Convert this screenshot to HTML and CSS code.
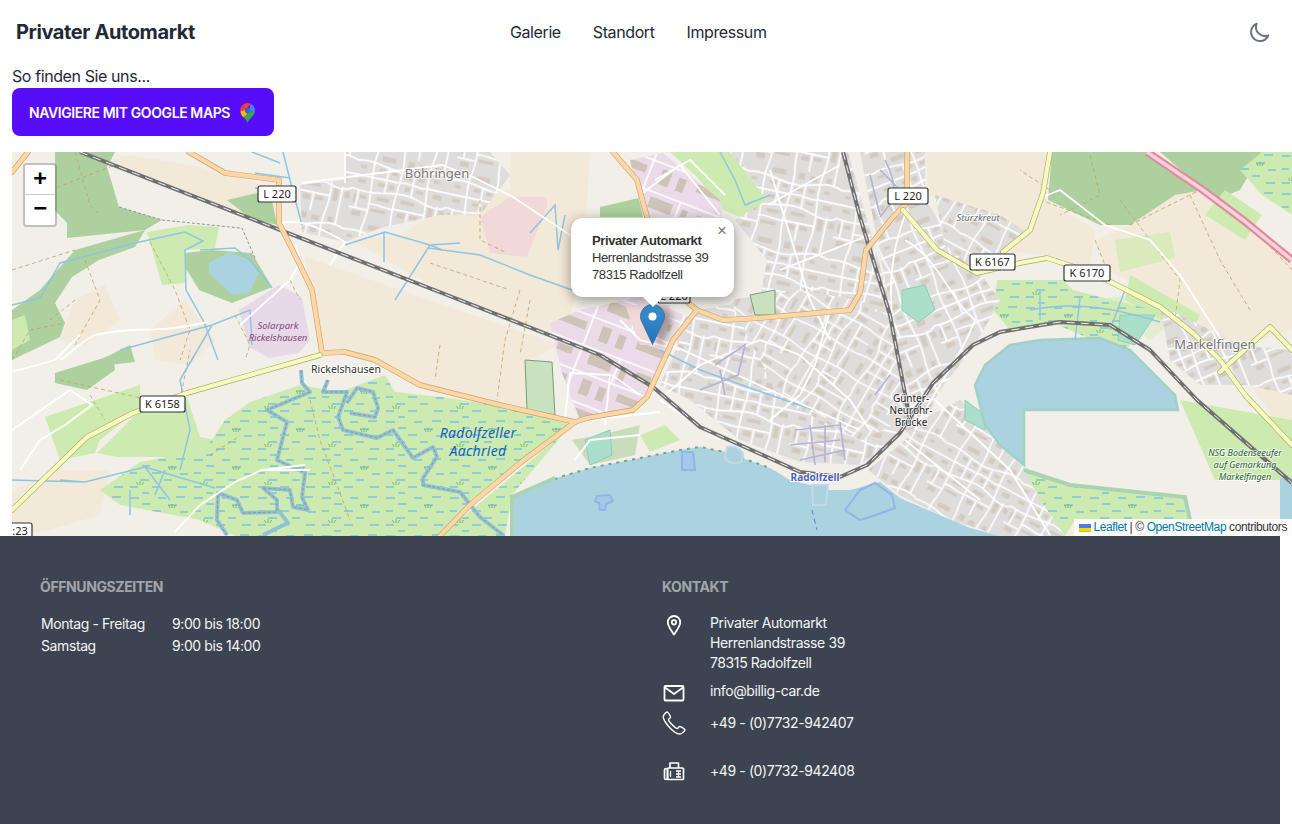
FILE: index.html
```html
<!DOCTYPE html>
<html lang="de">
<head>
    <meta charset="UTF-8">
    <meta name="viewport" content="width=device-width, initial-scale=1.0">
    <title>Privater Automarkt - Standort</title>
    <link rel="stylesheet" href="styles.css">
</head>
<body>
    <!-- Navigation -->
    <header class="navbar">
        <a class="brand" href="#">Privater Automarkt</a>
        <nav class="nav-links">
            <a href="#">Galerie</a>
            <a href="#">Standort</a>
            <a href="#">Impressum</a>
        </nav>
        <button class="theme-toggle" type="button" aria-label="Dark Mode">
            <svg viewBox="0 0 24 24" width="24" height="24" fill="none" stroke="currentColor" stroke-width="2" stroke-linecap="round" stroke-linejoin="round">
                <path d="M20.354 15.354A9 9 0 018.646 3.646 9.003 9.003 0 0012 21a9.003 9.003 0 008.354-5.646z"/>
            </svg>
        </button>
    </header>

    <!-- Standort -->
    <section class="location">
        <p class="location-intro">So finden Sie uns...</p>
        <a class="btn-maps" href="#">
            Navigiere mit Google Maps
            <svg viewBox="0 0 15 20" width="15" height="20">
                <path d="M15 7.5C15 12.5 9 15.5 7.5 20 6.6 16.6 4.5 15.5 3.3 14.3L9.7 9z" fill="#34a853"/>
                <path d="M.3 8.6 5 6.5 7.5 11 3.3 14.3C1.8 12.6.6 10.7.3 8.6z" fill="#fbbc04"/>
                <path d="M.3 8.6C0 7 .4 4.3 2.3 2.3L5.5 6 5 6.5z" fill="#ea4335"/>
                <path d="M2.3 2.3C3.5 1 5.3 0 7.5 0 8.7 0 9.8.3 10.7.8L7.5 4.7 5.5 6z" fill="#ea4335"/>
                <path d="M10.7.8C13.3 2 15 4.5 15 7.5L9.7 9 9.5 5.5z" fill="#4285f4"/>
                <circle cx="7.5" cy="7.5" r="2.7" fill="#3c5fd8"/>
            </svg>
        </a>

        <div class="map">
            <svg class="map-tiles" viewBox="12 152 1280 384" width="1280" height="384">
                <defs>
                    <g id="townTile">
                        <rect width="150" height="110" fill="#dfdddc"/>
                        <path d="M6 24h9v5H6zM36 24h10v6H36zM56 26h9v5h-9zM76 28h12v5H76zM98 26h10v6H98zM122 24h9v5h-9zM6 46h12v6H6zM38 46h12v6H38zM56 46h8v8h-8zM80 44h8v7h-8zM98 46h12v5H98zM125 46h14v8h-14zM40 68h20v6H40zM78 66h22v6H78zM122 68h8v20h-8zM4 70h4v14H4zM14 70h10v6H14zM34 88h24v5H34zM76 86h12v8H76zM96 86h12v6H96zM140 70h8v10h-8zM36 4h22v8H36zM78 4h10v10H78zM96 6h12v8H96zM122 4h8v8h-8zM6 96h14v8H6z" fill="#d3cbc0"/>
                        <path d="M0 18C30 10 60 30 90 22S130 10 150 18M0 62C40 70 70 50 100 60S140 70 150 62M28 0C20 30 36 70 28 110M70 0C76 35 62 70 70 110M115 0C108 40 124 70 115 110M0 40H28M28 40H68M70 40C90 35 100 45 115 40M115 40H150M50 20V60M92 22V60M28 82C45 78 55 86 70 82M70 82H118M135 64V110M135 0V16M10 62V92M0 92H28M92 82V110" stroke="#fff" stroke-width="2.6" fill="none"/>
                    </g>
                    <pattern id="townA" width="150" height="110" patternUnits="userSpaceOnUse" patternTransform="rotate(-22) scale(.62)">
                        <use href="#townTile"/>
                    </pattern>
                    <pattern id="townB" width="150" height="110" patternUnits="userSpaceOnUse" patternTransform="rotate(28) scale(.58)">
                        <use href="#townTile"/>
                    </pattern>
                    <pattern id="townC" width="150" height="110" patternUnits="userSpaceOnUse" patternTransform="rotate(12) scale(.64)">
                        <use href="#townTile"/>
                    </pattern>
                    <pattern id="townD" width="150" height="110" patternUnits="userSpaceOnUse" patternTransform="rotate(-60) scale(.56)">
                        <use href="#townTile"/>
                    </pattern>
                    <pattern id="indus" width="84" height="56" patternUnits="userSpaceOnUse" patternTransform="rotate(21)">
                        <rect width="84" height="56" fill="#ebdbe8"/>
                        <path d="M6 6h24v11H6zM40 7h6v16h-6zM56 7h16v7H56zM8 32h10v16H8zM26 34h8v14h-8zM46 34h30v8H46z" fill="#cec3b7"/>
                        <path d="M0 1H84M0 27H84M36 1V27M80 1V56" stroke="#fff" stroke-width="1.7" fill="none"/>
                    </pattern>
                    <pattern id="wet" width="64" height="38" patternUnits="userSpaceOnUse">
                        <rect width="64" height="38" fill="#cdebb0"/>
                        <path d="M2 4h9M30 4h8M48 3h9M14 10h8M40 11h9M2 17h7M24 17h9M52 18h8M12 24h9M36 24h8M2 31h8M24 31h9M50 31h9M14 37h7" stroke="#4fb0f7" stroke-width="1" fill="none"/>
                        <path d="M42 14l-1.5-3M44 14v-4M46 14l1.5-3M10 29l-1.5-3M12 29v-4M14 29l1.5-3" stroke="#72b463" stroke-width=".9" fill="none"/>
                    </pattern>
                </defs>

                <rect x="12" y="152" width="1280" height="384" fill="#f2efe9"/>

                <!-- Felder -->
                <g class="farmland">
                    <path d="M110 160L270 225 282 190 240 178 190 165 130 155z"/>
                    <path d="M305 257L560 345 530 360 525 412 480 398 410 382 375 360 345 352 322 352z"/>
                    <path d="M352 240L400 235 440 210 510 190 510 152 590 152 585 240 575 300 560 340 442 292z"/>
                    <path d="M925 152L1052 152 1042 200 1003 252 960 215 930 195z"/>
                    <path d="M1130 225L1160 195 1200 190 1292 265 1292 330 1240 345 1195 325 1160 300 1105 268 1095 240z"/>
                    <path d="M1000 250L1040 195 1095 230 1090 268 1050 256z"/>
                    <path d="M1240 370L1292 390 1292 445z"/>
                    <path d="M75 300L105 285 120 320 85 345 60 340z"/>
                    <path d="M150 330L185 300 215 340 190 365 155 360z"/>
                    <path d="M12 490L60 470 110 470 100 515 50 530 12 535z"/>
                </g>

                <!-- Wald -->
                <g class="forest">
                    <path d="M55 152L115 152 107 167 119 207 162 220 145 230 67 238 67 223 45 200 55 183z"/>
                    <path d="M75 250L145 230 135 247 99 260 72 277 55 303 65 323 60 337 12 360 12 310 40 290z"/>
                    <path d="M55 373L113 355 115 370 87 390 55 383z"/>
                    <path d="M1052 152L1147 152 1203 190 1175 195 1130 225 1100 225 1048 200z"/>
                    <path d="M1160 152L1262 152 1240 190 1215 200z"/>
                    <path d="M227 200L270 190 277 225 250 218z"/>
                    <path d="M185 253L212 250 252 253 272 287 232 303 199 290 185 267z"/>
                    <path d="M600 207L643 197 643 217 600 217z"/>
                    <path d="M100 360L130 345 135 362 100 366z"/>
                    <path d="M340 415L350 410 355 440 335 435z" opacity=".7"/>
                    <path d="M572 440L600 435 640 425 635 455 590 465z" opacity=".6"/>
                </g>

                <!-- Wiesen -->
                <g class="meadow">
                    <path d="M147 232L189 225 219 227 215 248 185 250 185 283 162 285z"/>
                    <path d="M670 152L730 152 767 200 747 220 723 210 697 177z"/>
                    <path d="M147 403L187 397 200 437 233 443 177 457 117 457 97 453z"/>
                    <path d="M45 417L140 385 140 408 100 440 95 453 60 460z"/>
                    <path d="M12 320L25 315 30 340 12 350z"/>
                    <path d="M1088 300L1160 292 1180 315 1150 340z" opacity=".4"/>
                    <path d="M1115 240L1170 232 1175 258 1120 272z" opacity=".7"/>
                    <path d="M1130 275L1200 315 1190 335 1125 300z"/>
                    <path d="M1180 400L1292 420 1292 480 1215 480z"/>
                    <path d="M1225 190L1262 215 1245 240 1205 215z"/>
                    <path d="M640 435L665 425 680 440 650 452z"/>
                </g>

                <!-- Nass -->
                <path fill="url(#wet)" d="M100 490L140 462 205 450 225 420 250 402 300 385 340 392 385 375 395 392 450 398 520 410 568 424 520 463 470 505 440 536 235 536 200 520 120 505z"/>
                <path fill="url(#wet)" d="M997 280L1063 280 1073 290 1153 310 1140 327 1127 350 1093 340 1053 323 1010 330 993 310z"/>
                <path fill="url(#wet)" d="M1262 152L1292 152 1292 215 1262 195 1240 170z"/>
                <path fill="url(#wet)" d="M1024 470L1070 485 1185 497 1190 520 1075 520 1065 536 1040 500z"/>
                <path fill="url(#wet)" d="M440 536L510 478 565 432 512 495 505 536z"/>

                <!-- Solarpark, Gewerbe -->
                <path class="solar" d="M239 310L279 285 302 297 310 340 299 353 269 358 249 347z"/>
                <path fill="url(#indus)" d="M630 160L663 153 720 200 723 217 643 217z"/>
                <path fill="url(#indus)" d="M550 323L580 310 640 297 690 317 683 360 677 340 647 397 637 410 580 420 562 373z"/>
                <path class="retail" d="M480 217L510 197 547 197 547 207 527 257 490 253z"/>
                <path class="retail" d="M625 305L670 305 665 345 640 345z"/>

                <!-- Orte -->
                <path fill="url(#townC)" d="M300 185L345 180 345 152 490 152 510 175 480 215 440 215 380 228 345 242 302 232z"/>
                <path fill="url(#townC)" d="M730 152L848 152 895 320 915 400 895 440 860 465 800 462 740 440 690 400 660 385 680 340 697 310 760 300 767 260 735 220 767 200z"/>
                <path fill="url(#townD)" d="M730 300L800 290 860 300 895 320 905 420 860 440 780 400z"/>
                <path fill="url(#townA)" d="M860 152L925 152 925 200 985 280 1000 300 975 345 940 390 915 440 905 430 895 330z"/>
                <path fill="url(#townB)" d="M935 195L1000 215 1030 235 1003 252 975 270 945 245z"/>
                <path fill="url(#townB)" d="M868 470L905 440 930 415 960 400 985 425 1000 445 1024 468 1040 500 1065 536 1000 536 950 520 900 495z"/>
                <path fill="url(#townA)" d="M1160 305L1200 325 1240 345 1292 350 1292 395 1245 385 1200 385 1170 360z"/>

                <!-- Sport, Gaerten -->
                <path class="pitch" d="M902 290L925 285 935 310 918 322 902 310z"/>
                <path class="pitch" d="M1120 315L1155 315 1135 345 1118 340z"/>
                <path class="pitch" d="M965 400L985 415 985 430 965 420z"/>
                <path class="pitch" d="M585 440L610 430 612 455 590 465z"/>
                <path class="allot" d="M750 295L775 290 775 315 755 315z"/>
                <path class="allot" d="M525 360L552 362 555 415 527 410z"/>

                <!-- Wasser -->
                <path class="water" d="M209 263L229 252 249 260 259 273 249 293 232 295 209 273z"/>
                <path class="shore" d="M975 385L985 365 1010 345 1040 340 1100 338 1130 350 1175 395 1178 410 1024 410 1024 465 1000 445 985 425z"/>
                <path class="water" d="M512 536L512 497 528 490 560 477 590 468 620 462 640 458 680 450 700 447 725 452 770 468 790 480 830 490 850 490 880 482 900 498 970 528 1000 536z"/>
                <path class="shore-line" d="M510 497L528 490 560 477 590 468 620 462 640 458 680 450 700 447 725 452 770 468"/>
                <path class="reed" d="M512 536L512 497 555 478"/>
                <path class="water-feature" d="M597 496L610 495 613 501 606 504 605 510 600 510 599 503 595 501z"/>
                <path class="water-feature water-ring" d="M845 510L860 490 875 483 892 495 895 508 870 517 860 520z"/>
                <path class="water-feature" d="M682 452L693 452 695 470 682 470z"/>
                <path class="harbor" d="M812 485L828 485 826 505 813 505z"/>
                <path class="harbor" d="M727 447C735 445 745 450 743 458 740 466 730 464 725 458z"/>
                <path class="ferry" d="M812 510L817 530"/>
                <path class="water" d="M1280 478H1292V519H1280z"/>
                <path class="reed" d="M1024 470L1070 485 1185 497 1190 520"/>

                <!-- Baeche -->
                <g class="stream">
                    <path d="M252 152L280 163M255 173L290 178M255 188L290 193M283 152L290 180 302 225"/>
                    <path d="M12 305L40 298 60 263 135 243 185 232 203 241 185 250 186 290 204 322 218 360"/>
                    <path d="M200 250L235 248 250 260 272 288"/>
                    <path d="M345 245L385 232 430 245 460 243M384 232V262M430 245L395 300M430 245L442 250"/>
                    <path d="M428 248L480 255 530 275 572 290 595 295"/>
                    <path d="M120 350L212 325 250 310 252 345M212 325L180 380 190 430 180 470"/>
                    <path d="M12 480L85 482 145 467 215 488M130 490V515M85 482L60 480M165 470L155 495M145 467L170 500"/>
                    <path d="M530 233L555 205 558 250 565 215"/>
                    <path d="M720 152L735 180 745 205 770 195"/>
                    <path d="M660 350L700 370 770 395 820 412"/>
                    <path d="M1040 290L1040 320M1080 298L1075 340M1125 290L1110 330M1030 310C1080 300 1120 310 1160 322"/>
                </g>

                <!-- Aach -->
                <g class="river">
                    <path d="M301 370L302 383 310 392 267 410 287 422 277 460 305 473 302 497 308 510 293 507 290 490 263 488 277 500 277 512 243 513 237 500 218 493 217 520 227 535"/>
                    <path d="M328 380L323 392 347 392 338 417 343 430 377 438 393 430 413 458 433 447 437 457 423 478 423 485 460 492 480 517 503 535"/>
                    <path d="M347 403L357 388 373 392 378 408 375 417 350 413"/>
                    <path d="M263 535L288 523 278 510"/>
                </g>
                <g class="river-dash">
                    <path d="M301 370L302 383 310 392 267 410 287 422 277 460 305 473 302 497 308 510 293 507 290 490 263 488 277 500 277 512 243 513 237 500 218 493 217 520 227 535"/>
                    <path d="M328 380L323 392 347 392 338 417 343 430 377 438 393 430 413 458 433 447 437 457 423 478 423 485 460 492 480 517 503 535"/>
                    <path d="M347 403L357 388 373 392 378 408 375 417 350 413"/>
                    <path d="M119 207L162 220 240 228 242 228 255 258"/>
                </g>

                <!-- Feldwege -->
                <g class="track">
                    <path d="M75 152L90 205 100 215M50 190L115 165M12 270L75 250M12 360L30 330 65 323M85 260L100 300 75 345"/>
                    <path d="M150 242L175 290 190 330 180 360M75 300L50 320M235 315L250 345 245 360M290 280L300 300"/>
                    <path d="M480 200V240L505 252M520 290L505 340 497 400M430 263L510 290M530 300L520 355M440 345L435 380"/>
                    <path d="M1050 190L1020 170M1040 200L1110 225M1090 155L1100 195 1060 215M1130 225L1200 190M1095 240L1105 265M1200 190L1255 230 1292 270M1190 195L1220 260 1250 310M1120 200L1180 280 1175 320"/>
                    <path d="M180 400L190 350M60 380L150 400M90 395L105 420M210 455L240 436M310 400L320 440 350 520"/>
                </g>

                <!-- Strassen -->
                <g class="street">
                    <path d="M175 532L200 505 235 482 262 470 305 465M262 470H310"/>
                    <path d="M70 390L92 405 65 425 40 440 20 470M12 430L70 390"/>
                    <path d="M12 372L55 360M55 360L80 335"/>
                    <path d="M240 325L290 280 300 262 296 245M208 322C150 335 140 325 95 335 75 345 70 355 60 360"/>
                    <path d="M302 183L442 165 473 177 513 197 573 237M345 183V152"/>
                    <path d="M282 223C300 218 325 230 345 242L330 265"/>
                    <path d="M665 395L700 365 760 340M760 340L800 355 850 400 870 430M650 335L770 390 860 430M830 310L815 365 800 395 770 420"/>
                    <path d="M768 205L840 165M780 270L870 235M770 170L810 300 830 340"/>
                    <path d="M905 215C890 255 885 300 900 370M905 240C940 260 950 300 975 320 960 360 930 395 915 430"/>
                    <path d="M1040 198L1060 190 1105 225 1150 240 1180 275 1225 345"/>
                    <path d="M935 400L1010 470 1050 535M905 440L980 500"/>
                    <path d="M575 460L590 440 640 435M590 420L660 412M660 400L720 440"/>
                    <path d="M570 373L610 375 605 425M612 375L640 395M570 372L565 420M680 350L640 340 620 320"/>
                    <path d="M655 180L690 160 725 195M640 195L680 165 720 215"/>
                </g>
                <g class="pedestrian">
                    <path d="M795 430L840 425M790 445L840 440M800 460L845 450M810 425L815 465M825 425V462M840 422L845 460"/>
                    <path d="M715 365L745 345 738 375 700 390M720 370L725 395M880 170L900 190M870 175L880 215M885 160C900 190 895 200 880 217"/>
                    <path d="M875 395L890 375"/>
                </g>

                <!-- Bahn -->
                <path class="rail" d="M80 152L442 293 600 355 653 387 700 427 767 457 800 472 840 477 867 465 900 433 933 383 973 345 1000 332 1060 322 1110 325 1150 350 1197 400 1292 483"/>
                <path class="rail-dash" d="M80 152L442 293 600 355 653 387 700 427 767 457 800 472 840 477 867 465 900 433 933 383 973 345 1000 332 1060 322 1110 325 1150 350 1197 400 1292 483"/>
                <path class="rail" d="M843 152L860 217 890 315 910 420"/>
                <path class="rail-dash" d="M843 152L860 217 890 315 910 420"/>

                <!-- Hauptstrassen -->
                <g class="road-case">
                    <path d="M189 152L225 173 279 180 279 223 299 263 312 290 322 353 345 352 375 360 420 385 500 405 575 422 587 418 633 410 647 397 673 340 697 310 723 320 760 318 850 310 860 293 866 250 893 217 907 203 907 152"/>
                    <path d="M613 152L637 180 647 217 660 280 697 310"/>
                    <path d="M575 422L520 463 470 505 440 536"/>
                    <path d="M12 172L28 152"/>
                </g>
                <g class="road-secondary">
                    <path d="M189 152L225 173 279 180 279 223 299 263 312 290 322 353 345 352 375 360 420 385 500 405 575 422 587 418 633 410 647 397 673 340 697 310 723 320 760 318 850 310 860 293 866 250 893 217 907 203 907 152"/>
                    <path d="M613 152L637 180 647 217 660 280 697 310"/>
                    <path d="M575 422L520 463 470 505 440 536"/>
                    <path d="M12 172L28 152"/>
                </g>
                <g class="road-case-y">
                    <path d="M12 510L87 437 133 413 187 393 320 355"/>
                    <path d="M903 210L937 250 977 273 1020 263 1047 258 1093 273 1160 307 1193 333 1220 360 1245 395 1292 445"/>
                    <path d="M1003 252L1030 230 1043 193 1050 152"/>
                    <path d="M1220 372L1270 327 1292 350"/>
                </g>
                <g class="road-tertiary">
                    <path d="M12 510L87 437 133 413 187 393 320 355"/>
                    <path d="M903 210L937 250 977 273 1020 263 1047 258 1093 273 1160 307 1193 333 1220 360 1245 395 1292 445"/>
                    <path d="M1003 252L1030 230 1043 193 1050 152"/>
                    <path d="M1220 372L1270 327 1292 350"/>
                </g>
                <path class="motorway" d="M1147 152L1203 190 1243 220 1292 260"/>
                <path class="motorway-in" d="M1147 152L1203 190 1243 220 1292 260"/>

                <!-- Beschriftung -->
                <g class="shield">
                    <rect x="258" y="186" width="38" height="16" rx="2"/><text x="277" y="198">L 220</text>
                    <rect x="888" y="188" width="40" height="16" rx="2"/><text x="908" y="200">L 220</text>
                    <rect x="970" y="254" width="45" height="16" rx="2"/><text x="992.5" y="266">K 6167</text>
                    <rect x="1064" y="265" width="46" height="16" rx="2"/><text x="1087" y="277">K 6170</text>
                    <rect x="140" y="396" width="45" height="16" rx="2"/><text x="162.5" y="408">K 6158</text>
                    <rect x="-2" y="523" width="34" height="16" rx="2"/><text x="20" y="535">:23</text>
                    <rect x="658" y="289" width="32" height="14" rx="2"/><text x="674" y="300">L 220</text>
                </g>
                <text class="label place" x="437" y="178">Böhringen</text>
                <text class="label place" x="1215" y="349">Markelfingen</text>
                <text class="label hamlet" x="346" y="373">Rickelshausen</text>
                <text class="label suburb" x="978" y="221">Stürzkreut</text>
                <text class="label bridge" x="911" y="402">Günter-</text>
                <text class="label bridge" x="911" y="414">Neurohr-</text>
                <text class="label bridge" x="911" y="426">Brücke</text>
                <text class="label station" x="815" y="481">Radolfzell</text>
                <text class="label solar-name" x="278" y="329">Solarpark</text>
                <text class="label solar-name" x="278" y="341">Rickelshausen</text>
                <text class="label nature" x="478" y="438">Radolfzeller</text>
                <text class="label nature" x="478" y="456">Aachried</text>
                <text class="label reserve" x="1245" y="456">NSG Bodenseeufer</text>
                <text class="label reserve" x="1245" y="468">auf Gemarkung</text>
                <text class="label reserve" x="1245" y="480">Markelfingen</text>
            </svg>

            <div class="zoom-control">
                <a class="zoom-btn" href="#">+</a>
                <a class="zoom-btn" href="#">&#x2212;</a>
            </div>

            <!-- Marker mit Popup -->
            <svg class="marker" viewBox="0 0 25 41" width="25" height="41">
                <defs>
                    <linearGradient id="pinFill" x1="0" y1="0" x2="0" y2="1">
                        <stop offset="0" stop-color="#3f8fc8"/>
                        <stop offset="1" stop-color="#1f74c0"/>
                    </linearGradient>
                </defs>
                <path d="M12.5.5C5.9.5.5 5.8.5 12.4c0 2.4.8 4.5 1.9 6.5L12.5 40.5l10.1-21.6c1.1-2 1.9-4.1 1.9-6.5C24.5 5.8 19.1.5 12.5.5z" fill="url(#pinFill)" stroke="#2a6ea3" stroke-width=".8"/>
                <circle cx="12.5" cy="12.5" r="4" fill="#fff"/>
            </svg>
            <div class="popup">
                <a class="popup-close" href="#">&#215;</a>
                <p class="popup-text"><b>Privater Automarkt</b><br>Herrenlandstrasse 39<br>78315 Radolfzell</p>
                <div class="popup-tip"></div>
            </div>

            <div class="attribution">
                <a href="#"><svg class="flag" viewBox="0 0 12 8" width="12" height="8"><path fill="#4c7be1" d="M0 0h12v4H0z"/><path fill="#ffd500" d="M0 4h12v3H0z"/><path fill="#e0bc00" d="M0 7h12v1H0z"/></svg> Leaflet</a> | © <a href="#">OpenStreetMap</a> contributors
            </div>
        </div>
    </section>

    <!-- Footer -->
    <footer class="footer">
        <div class="footer-col">
            <h2 class="footer-title">Öffnungszeiten</h2>
            <table class="hours">
                <tr><td>Montag - Freitag</td><td>9:00 bis 18:00</td></tr>
                <tr><td>Samstag</td><td>9:00 bis 14:00</td></tr>
            </table>
        </div>
        <div class="footer-col">
            <h2 class="footer-title">Kontakt</h2>
            <ul class="contact">
                <li class="contact-row">
                    <svg viewBox="0 0 24 24" width="24" height="24" fill="none" stroke="#fff" stroke-width="1.8" stroke-linejoin="round">
                        <path d="M12 21.5C9.5 17.5 5.8 13.5 5.8 9.3 5.8 5.7 8.5 3 12 3s6.2 2.7 6.2 6.3c0 4.2-3.7 8.2-6.2 12.2z"/>
                        <circle cx="12" cy="9.3" r="2.2"/>
                    </svg>
                    <span>Privater Automarkt<br>Herrenlandstrasse 39<br>78315 Radolfzell</span>
                </li>
                <li class="contact-row">
                    <svg viewBox="0 0 24 24" width="24" height="24" fill="none" stroke="#fff" stroke-width="1.8" stroke-linejoin="round">
                        <rect x="2.5" y="5" width="19" height="14.5" rx="1"/>
                        <path d="M3 6.5L12 13l9-6.5"/>
                    </svg>
                    <span>info@billig-car.de</span>
                </li>
                <li class="contact-row contact-row-phone">
                    <svg viewBox="0 0 24 24" width="24" height="24" fill="none" stroke="#fff" stroke-width="1.4" stroke-linejoin="round">
                        <path d="M1.5 4.5C2.5 3 4 1 5.2 1 6 1 8.5 5.2 8.5 6.2 8.5 7.3 6.5 7.8 6.5 8.8 6.5 10.5 13.5 17.5 15.2 17.5 16.2 17.5 16.7 15.5 17.7 15.5 18.7 15.5 23 18 23 18.8 23 20 21 21.5 19.5 22.5 17.5 23.8 13 22.5 8 17 3 11.5.7 6.5 1.5 4.5z"/>
                    </svg>
                    <span>+49 - (0)7732-942407</span>
                </li>
                <li class="contact-row contact-row-fax">
                    <svg viewBox="0 0 24 24" width="24" height="24" fill="none" stroke="#fff" stroke-width="1.7" stroke-linejoin="round">
                        <path d="M8 9V4h8.5v5"/>
                        <rect x="5.5" y="9" width="16" height="11.5" rx="1"/>
                        <rect x="2.5" y="9.5" width="3" height="11" rx="1.5"/>
                        <path d="M14 12h5M14 15h5M14 18h5M16.5 12v6M8.5 12v6" stroke-width="1.3"/>
                    </svg>
                    <span>+49 - (0)7732-942408</span>
                </li>
            </ul>
        </div>
    </footer>
</body>
</html>
```

FILE: styles.css
```css
* {
    box-sizing: border-box;
}
body {
    margin: 0;
    font-family: 'Inter', 'Liberation Sans', sans-serif;
    font-size: 16px;
    line-height: 24px;
    letter-spacing: -0.4px;
    color: #1f2937;
    background: #fff;
    overflow-x: hidden;
}
a {
    color: inherit;
    text-decoration: none;
}

/* Navigation */
.navbar {
    display: flex;
    align-items: center;
    height: 64px;
    padding: 0 20px 0 16px;
}
.brand {
    width: 494px;
    font-size: 20px;
    font-weight: 700;
    color: #1f2937;
}
.nav-links {
    display: flex;
    gap: 32px;
}
.theme-toggle {
    margin-left: auto;
    padding: 0;
    border: none;
    background: none;
    color: #6b7280;
    display: flex;
}

/* Standort */
.location {
    padding: 0 0 0 12px;
}
.location-intro {
    margin: 0;
    height: 24px;
}
.btn-maps {
    display: inline-flex;
    align-items: center;
    gap: 10px;
    height: 48px;
    padding: 2px 19px 0 17px;
    border-radius: 8px;
    background: #570df8;
    color: #fff;
    font-size: 14px;
    font-weight: 600;
    text-transform: uppercase;
}
.map {
    position: relative;
    width: 1280px;
    height: 384px;
    margin-top: 16px;
    overflow: hidden;
    font-family: 'Liberation Sans', Arial, sans-serif;
}
.map-tiles {
    display: block;
    letter-spacing: 0;
}

/* Kartenflaechen */
.farmland path { fill: #f3e9d8; }
.forest path { fill: #add19e; }
.meadow path { fill: #cdebb0; }
.solar { fill: #e8d9e8; }
.retail { fill: #f1d9d8; }
.pitch { fill: #aae0cb; stroke: #8fcdb6; stroke-width: 1; }
.allot { fill: #c9e1bf; stroke: #7e9a76; stroke-width: 1; }
.water { fill: #aad3df; }
.shore { fill: #aad3df; stroke: #a3d0c6; stroke-width: 2.5; }
.shore-line { fill: none; stroke: #7a9f96; stroke-width: 2; stroke-dasharray: 3 5; }
.reed { fill: none; stroke: #a9d3b3; stroke-width: 4; }
.water-feature { fill: #a3c8ea; stroke: #8eb6e6; stroke-width: 2; }
.water-ring { fill: #aad3df; }
.harbor { fill: #aad3df; stroke: #c9d6ea; stroke-width: 2; }
.ferry { stroke: #5b7fd8; stroke-width: 1; stroke-dasharray: 5 4; fill: none; }
.stream path { fill: none; stroke: #8ec5e2; stroke-width: 1.5; }
.river path { fill: none; stroke: #93c2d3; stroke-width: 4; stroke-linejoin: round; }
.river-dash path { fill: none; stroke: #84989c; stroke-width: 1; stroke-dasharray: 3 2; }
.track path { fill: none; stroke: #bf9f63; stroke-width: .8; stroke-dasharray: 4 3; }
.street path { fill: none; stroke: #fff; stroke-width: 1.8; stroke-linejoin: round; }
.pedestrian path { fill: none; stroke: #b4b5d6; stroke-width: 1.7; }
.rail { fill: none; stroke: #707070; stroke-width: 4; stroke-linejoin: round; }
.rail-dash { fill: none; stroke: #f2f2f2; stroke-width: 1; stroke-dasharray: 8 6; }
.road-case path, .road-case-y path { fill: none; stroke-linejoin: round; stroke-linecap: round; }
.road-case path { stroke: #c9a269; stroke-width: 5.5; }
.road-secondary path { fill: none; stroke: #fcd6a4; stroke-width: 4.3; stroke-linejoin: round; stroke-linecap: round; }
.road-case-y path { stroke: #a9a964; stroke-width: 5.5; }
.road-tertiary path { fill: none; stroke: #f7fabf; stroke-width: 4.3; stroke-linejoin: round; stroke-linecap: round; }
.motorway { fill: none; stroke: #e38a9f; stroke-width: 8; }
.motorway-in { fill: none; stroke: #f5d3db; stroke-width: 3.5; }

/* Kartenschrift */
.shield rect { fill: #fff; stroke: #333; stroke-width: 1.2; }
.shield text {
    font-family: 'Noto Sans', sans-serif;
    font-size: 11px;
    fill: #222;
    text-anchor: middle;
}
.label {
    font-family: 'Noto Sans', sans-serif;
    text-anchor: middle;
    paint-order: stroke;
    stroke: #ffffff;
    stroke-width: 2px;
    stroke-opacity: .7;
}
.place { font-size: 13px; fill: #777; }
.hamlet { font-size: 10.5px; fill: #333; stroke-opacity: 1; }
.suburb { font-size: 9.5px; font-style: italic; fill: #6a6a6a; }
.bridge { font-size: 10px; fill: #222; }
.station { font-size: 10px; font-weight: 700; fill: #4f5fb5; stroke-opacity: 1; }
.solar-name { font-size: 9.5px; font-style: italic; fill: #85457c; stroke: none; }
.nature { font-size: 14px; font-style: italic; fill: #0f62bd; stroke: none; letter-spacing: .3px; }
.reserve { font-size: 9px; font-style: italic; fill: #23622f; }

/* Leaflet Steuerung */
.zoom-control {
    position: absolute;
    top: 11px;
    left: 11px;
    width: 34px;
    border: 2px solid rgba(0, 0, 0, 0.2);
    border-radius: 4px;
    background-clip: padding-box;
}
.zoom-btn {
    display: block;
    width: 30px;
    height: 30px;
    background: #fff;
    color: #000;
    font: bold 22px/25px 'DejaVu Sans Mono', 'Liberation Mono', monospace;
    letter-spacing: 0;
    text-align: center;
}
.zoom-btn:first-child {
    border-bottom: 1px solid #ccc;
    border-radius: 2px 2px 0 0;
}
.zoom-btn:last-child {
    border-radius: 0 0 2px 2px;
}
.marker {
    position: absolute;
    left: 628px;
    top: 152px;
    filter: drop-shadow(8px 3px 3px rgba(0, 0, 0, 0.3));
}
.popup {
    position: absolute;
    left: 559px;
    top: 66px;
    width: 163px;
    height: 79px;
    border-radius: 12px;
    background: #fff;
    color: #333;
    box-shadow: 0 3px 14px rgba(0, 0, 0, 0.4);
}
.popup-text {
    margin: 0;
    padding: 14px 0 0 21px;
    font-size: 13px;
    line-height: 17px;
    white-space: nowrap;
}
.popup-close {
    position: absolute;
    top: 4px;
    right: 6px;
    width: 12px;
    color: #757575;
    font: 16px/18px 'Liberation Sans', sans-serif;
    letter-spacing: 0;
    text-align: center;
}
.popup-tip {
    position: absolute;
    left: 72px;
    top: 79px;
    width: 0;
    height: 0;
    border-left: 10px solid transparent;
    border-right: 10px solid transparent;
    border-top: 10px solid #fff;
}
.attribution {
    position: absolute;
    right: 0;
    bottom: 0;
    height: 17px;
    padding: 0 5px;
    background: rgba(255, 255, 255, 0.8);
    color: #333;
    font-size: 12px;
    line-height: 17px;
    white-space: nowrap;
}
.attribution a {
    color: #0078a8;
}
.flag {
    vertical-align: -1px;
}

/* Footer */
.footer {
    display: grid;
    grid-template-columns: 622px 1fr;
    width: 1280px;
    height: 288px;
    padding: 40px 40px 0;
    background: #3d4451;
    color: #f3f4f6;
    font-size: 14px;
}
.footer-title {
    margin: 0 0 15px;
    font-size: 14px;
    line-height: 22px;
    font-weight: 700;
    text-transform: uppercase;
    color: #a2a5ab;
}
.hours {
    border-collapse: collapse;
}
.hours td {
    padding: 0 1px;
    line-height: 22px;
}
.hours td:first-child {
    width: 131px;
}
.contact {
    margin: 0;
    padding: 0;
    list-style: none;
}
.contact-row {
    display: flex;
    gap: 24px;
    line-height: 20px;
    margin-bottom: 8px;
}
.contact-row svg {
    flex: none;
}
.contact-row-phone {
    margin-bottom: 24px;
    margin-top: -2px;
    line-height: 24px;
}
.contact-row-fax {
    line-height: 24px;
}
```
